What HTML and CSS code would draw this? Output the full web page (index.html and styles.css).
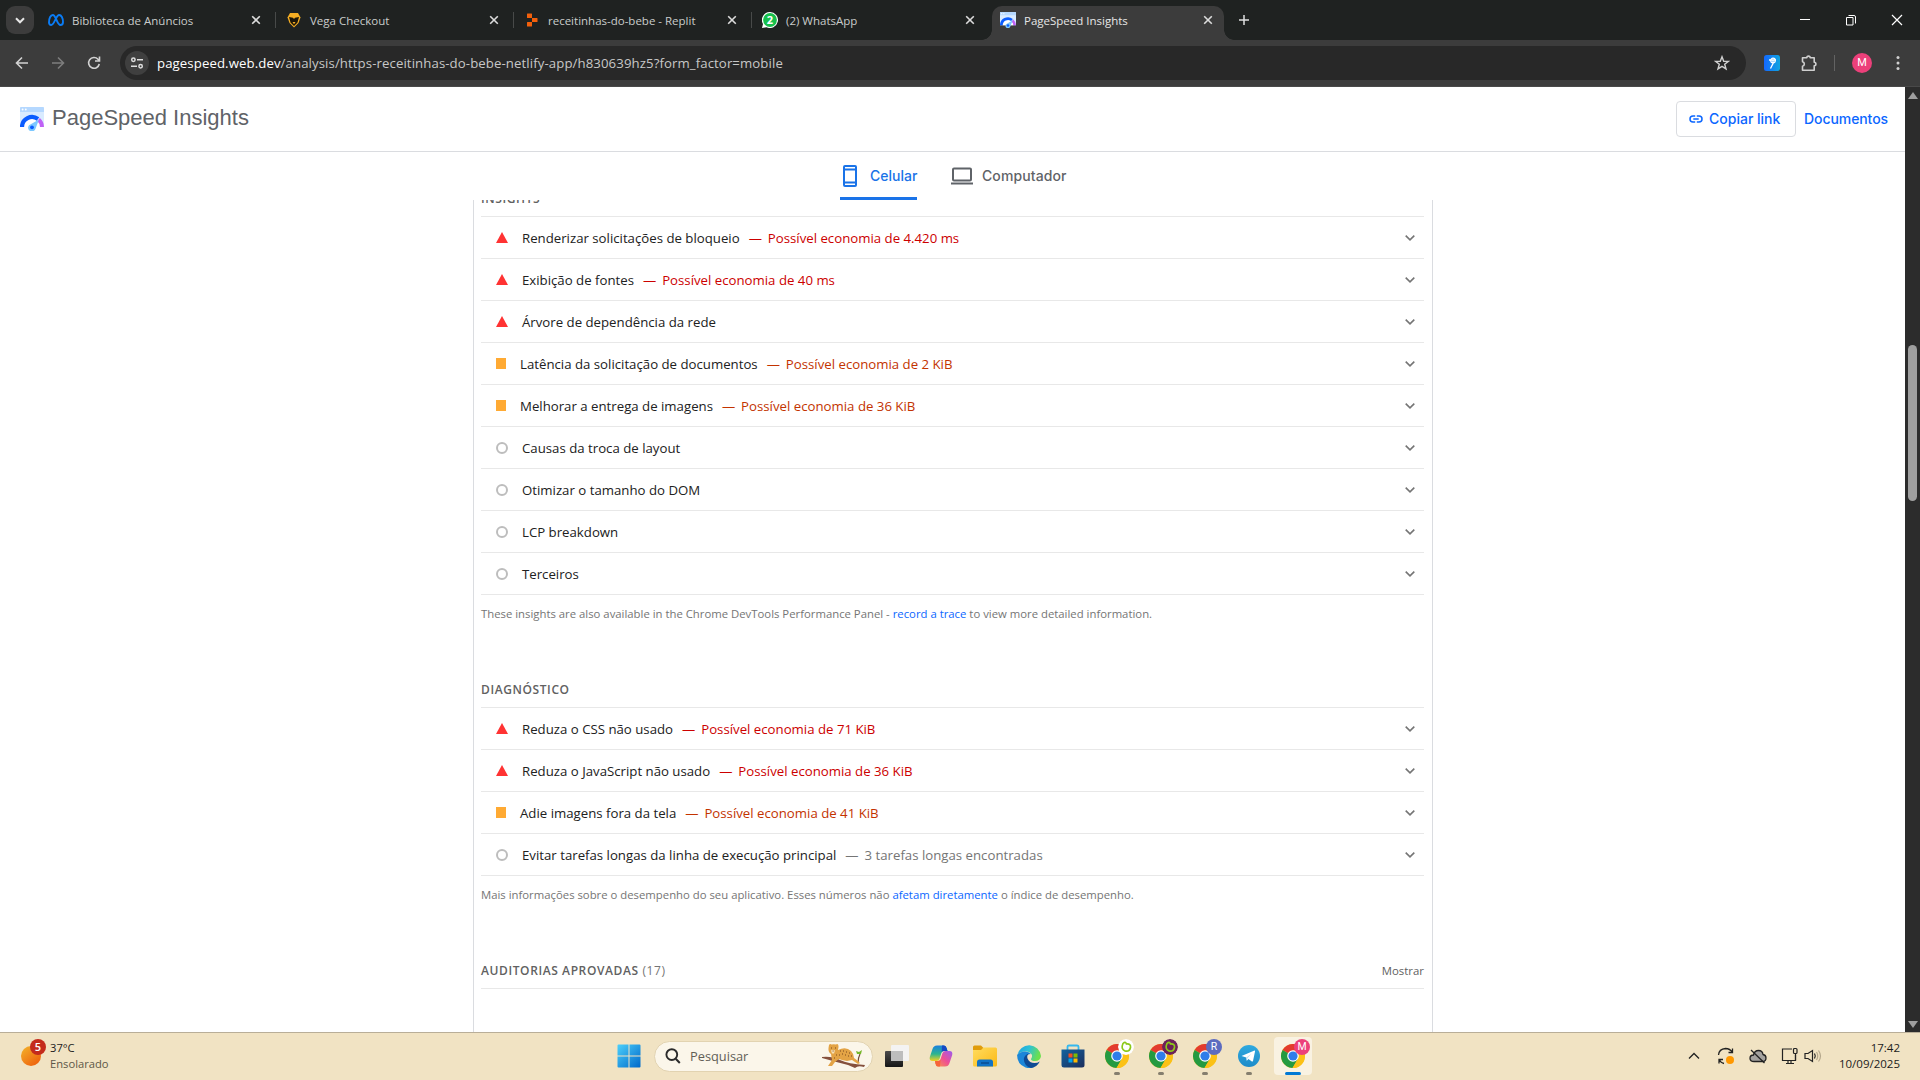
FILE: index.html
```html
<!DOCTYPE html>
<html lang="pt-BR">
<head>
<meta charset="utf-8">
<title>PageSpeed Insights</title>
<link rel="stylesheet" href="styles.css">
</head>
<body>
<svg class="defs" width="0" height="0">
  <defs>
    <linearGradient id="win" x1="0" y1="0" x2="1" y2="1"><stop offset="0" stop-color="#4cd0fb"/><stop offset="1" stop-color="#0068c9"/></linearGradient>
    <linearGradient id="sun" x1="0" y1="0" x2=".8" y2="1"><stop offset="0" stop-color="#f3b52c"/><stop offset="1" stop-color="#ee5f0c"/></linearGradient>
    <linearGradient id="ext" x1="0" y1="0" x2="1" y2="0"><stop offset="0" stop-color="#1468ff"/><stop offset="1" stop-color="#0fa5e0"/></linearGradient>
    <linearGradient id="edgeTop" x1="0" y1="0" x2="1" y2=".3"><stop offset="0" stop-color="#1c9fe0"/><stop offset=".5" stop-color="#2cc0d8"/><stop offset="1" stop-color="#6be04e"/></linearGradient>
    <linearGradient id="folder" x1="0" y1="0" x2="1" y2="1"><stop offset="0" stop-color="#ffdc5e"/><stop offset="1" stop-color="#fbb917"/></linearGradient>
    <linearGradient id="store" x1="0" y1="0" x2="1" y2="1"><stop offset="0" stop-color="#12639f"/><stop offset="1" stop-color="#1c2e5c"/></linearGradient>
    <linearGradient id="tg" x1="0" y1="0" x2="0" y2="1"><stop offset="0" stop-color="#2fa9df"/><stop offset="1" stop-color="#1d8bc9"/></linearGradient>
    <linearGradient id="copA" x1="0" y1="0" x2="0" y2="1"><stop offset="0" stop-color="#1a7fe0"/><stop offset=".55" stop-color="#2bb58f"/><stop offset="1" stop-color="#f3d21e"/></linearGradient>
    <linearGradient id="copB" x1="1" y1="0" x2="0" y2="1"><stop offset="0" stop-color="#9b5cf0"/><stop offset=".5" stop-color="#ee4f94"/><stop offset="1" stop-color="#fb9a45"/></linearGradient>
    <linearGradient id="view" x1="0" y1="0" x2="0" y2="1"><stop offset="0" stop-color="#4b4b4b"/><stop offset="1" stop-color="#161616"/></linearGradient>
    <symbol id="psi" viewBox="0 0 24 24">
      <path d="M0 1.2Q0 0 1.2 0H22.8Q24 0 24 1.2V20H0z" fill="#d9ebff"/>
      <path d="M0 1.2Q0 0 1.2 0H22.8Q24 0 24 1.2V5H0z" fill="#b5d8ff"/>
      <circle cx="2.6" cy="2.5" r=".9" fill="#fff"/><circle cx="5.8" cy="2.5" r=".9" fill="#fff"/>
      <path d="M4 20a8 8 0 0 1 16 0z" fill="#fff"/>
      <path d="M2 20a10 10 0 0 1 16-8" fill="none" stroke="#0a5cff" stroke-width="4.2"/>
      <path d="M18.6 12.6A10 10 0 0 1 22 20" fill="none" stroke="#c061f5" stroke-width="4"/>
      <path d="M19 12.5 15.6 21.5A3.800 3.800 0 1 1 9 18.200z" fill="#7cc8ff"/><circle cx="12" cy="20.300" r="1.900" fill="#0a5cff"/>
    </symbol>
    <symbol id="x" viewBox="0 0 10 10"><path d="M1.200 1.200 8.800 8.800M8.800 1.200 1.200 8.800" stroke="#dcdcdc" stroke-width="1.600" fill="none"/></symbol>
    <symbol id="chev" viewBox="0 0 12 8"><path d="M1.700 1.600 6 5.800 10.300 1.600" stroke="#757575" stroke-width="1.600" fill="none"/></symbol>
    <symbol id="chrome" viewBox="0 0 24 24">
      <circle cx="12" cy="12" r="12" fill="#fbc116"/>
      <path d="M12 12 1.600 6A12 12 0 0 1 22.400 6z" fill="#e33b2e"/>
      <path d="M12 12 1.600 6A12 12 0 0 0 11.500 24L17 15z" fill="#249a41"/>
      <path d="M12 6.500H22.600A12 12 0 0 1 11.500 24L17 14.500z" fill="#fbc116"/>
      <circle cx="12" cy="12" r="5.800" fill="#fff"/><circle cx="12" cy="12" r="4.600" fill="#2f7de9"/>
    </symbol>
  </defs>
</svg>

<div class="tabstrip">
  <button class="tabsearch"><svg width="10" height="7" viewBox="0 0 10 7"><path d="M1 1.300 5 5.300 9 1.300" stroke="#e8e8e8" stroke-width="2" fill="none"/></svg></button>
  <div class="tab">
    <svg class="fav" width="16" height="16" viewBox="0 0 16 16"><path d="M1 10.500C1 6 2.700 3 4.800 3 8 3 9 13 12.500 13c1.700 0 2.500-1.200 2.500-3C15 6 13.300 3 11.200 3 8 3 6.500 13 3.200 13 1.800 13 1 12 1 10.500z" fill="none" stroke="#0a7cf5" stroke-width="1.900"/></svg>
    <span class="tab-title">Biblioteca de Anúncios</span><svg class="close" width="10" height="10"><use href="#x"/></svg>
  </div>
  <div class="tab">
    <svg class="fav" width="16" height="16" viewBox="0 0 16 16"><path d="M4 1h8L14.500 5.500 12.500 11 8 15.500 3.500 11 1.500 5.500z" fill="#f6ae23"/><path d="M3 5l4 .8L8 7l1-1.200L13 5l-1.500 5.500L8 14 4.500 10.500z" fill="#1d1608"/><path d="M6.500 10h3L8 12.300z" fill="#f6ae23"/></svg>
    <span class="tab-title">Vega Checkout</span><svg class="close" width="10" height="10"><use href="#x"/></svg>
  </div>
  <div class="tab">
    <svg class="fav" width="16" height="16" viewBox="0 0 16 16" fill="#f2600c"><path d="M3 2Q3 1.500 3.500 1.500H7.500Q8 1.500 8 2V6H3.500Q3 6 3 5.500zM8 6H13Q13.500 6 13.500 6.500V9.500Q13.500 10 13 10H8zM3 10.500Q3 10 3.500 10H8V14Q8 14.500 7.500 14.500H3.500Q3 14.500 3 14z"/></svg>
    <span class="tab-title">receitinhas-do-bebe - Replit</span><svg class="close" width="10" height="10"><use href="#x"/></svg>
  </div>
  <div class="tab no-sep">
    <svg class="fav" width="16" height="16" viewBox="0 0 16 16"><path d="M8 0a8 8 0 1 1-3.500 15.200L0 16l1-4A8 8 0 0 1 8 0z" fill="#fff"/><circle cx="8" cy="8" r="6.900" fill="#17bf4c"/><text class="wa" x="8" y="11.900" text-anchor="middle">2</text></svg>
    <span class="tab-title">(2) WhatsApp</span><svg class="close" width="10" height="10"><use href="#x"/></svg>
  </div>
  <div class="tab active">
    <svg class="fav" width="16" height="16"><use href="#psi"/></svg>
    <span class="tab-title">PageSpeed Insights</span><svg class="close" width="10" height="10"><use href="#x"/></svg>
  </div>
  <svg class="newtab" width="12" height="12" viewBox="0 0 12 12"><path d="M6 1v10M1 6h10" stroke="#e0e0e0" stroke-width="1.500"/></svg>
  <div class="winctl">
    <svg width="12" height="12" viewBox="0 0 12 12"><path d="M1 5.500h10" stroke="#fff"/></svg>
    <svg width="12" height="12" viewBox="0 0 12 12"><path d="M1.500 3.500h6.500v7.500h-6.500zM3.500 1.500h5.500q1.500 0 1.500 1.500v6.500" stroke="#fff" fill="none"/></svg>
    <svg width="12" height="12" viewBox="0 0 12 12"><path d="M1 1l10 10M11 1 1 11" stroke="#fff" stroke-width="1.200"/></svg>
  </div>
</div>

<div class="toolbar">
  <div class="nav">
    <svg width="16" height="16" viewBox="0 0 16 16"><path d="M14 8H3M8 2.500 2.500 8 8 13.500" fill="none" stroke="#d2d2d2" stroke-width="1.600"/></svg>
    <svg width="16" height="16" viewBox="0 0 16 16"><path d="M2 8h11M8 2.500 13.500 8 8 13.500" fill="none" stroke="#7d7d7d" stroke-width="1.600"/></svg>
    <svg width="16" height="16" viewBox="0 0 16 16"><path d="M13.300 9A5.400 5.400 0 1 1 12 4.200L13.500 5.700M13.500 1.500V6H9" fill="none" stroke="#d2d2d2" stroke-width="1.600"/></svg>
  </div>
  <div class="omnibox">
    <span class="siteinfo"><svg width="14" height="14" viewBox="0 0 14 14" fill="none" stroke="#dedede" stroke-width="1.500"><circle cx="3.400" cy="3.800" r="1.700"/><path d="M7 3.800h6M1 10.300h6"/><circle cx="10.600" cy="10.300" r="1.700"/></svg></span>
    <span class="url"><b>pagespeed.web.dev</b>/analysis/https-receitinhas-do-bebe-netlify-app/h830639hz5?form_factor=mobile</span>
    <svg class="star" width="16" height="16" viewBox="0 0 16 16"><path d="M8 1.800 9.700 6.200 14.400 6.400 10.700 9.300 12 13.900 8 11.300 4 13.900 5.300 9.300 1.600 6.400 6.300 6.200z" fill="none" stroke="#d0d0d0" stroke-width="1.400"/></svg>
  </div>
  <div class="actions">
    <svg width="16" height="16" viewBox="0 0 16 16"><rect width="16" height="16" rx="2.500" fill="url(#ext)"/><circle cx="9" cy="5.500" r="2.300" fill="none" stroke="#fff" stroke-width="1.200"/><path d="M5 5h7M9 5v3.500L6.500 13.500" stroke="#fff" stroke-width="1.300" fill="none"/></svg>
    <svg width="18" height="18" viewBox="0 0 18 18"><path d="M2.500 3.800h4.300a1.700 1.700 0 0 1 3.400 0h4v4.500a1.700 1.700 0 0 1 0 3.400v4.500H2.500v-4a2.300 2.300 0 0 0 0-4.500z" fill="none" stroke="#cfcfcf" stroke-width="1.600" stroke-linejoin="round"/></svg>
    <i class="vsep"></i>
    <span class="avatar">M</span>
    <svg width="4" height="16" viewBox="0 0 4 16" fill="#d0d0d0"><circle cx="2" cy="2.500" r="1.500"/><circle cx="2" cy="8" r="1.500"/><circle cx="2" cy="13.500" r="1.500"/></svg>
  </div>
</div>

<div class="viewport">
  <div class="page">
    <header class="psi-header">
      <svg width="24" height="24" viewBox="0 0 24 24"><use href="#psi"/></svg>
      <h1>PageSpeed Insights</h1>
      <a class="copy"><svg width="14" height="8" viewBox="0 0 14 8" fill="none" stroke="#0b66ff" stroke-width="1.500"><path d="M6.200 1H4a3 3 0 0 0 0 6h2.200M7.800 1H10a3 3 0 0 1 0 6H7.800M4.300 4h5.400"/></svg>Copiar link</a>
      <a class="docs">Documentos</a>
    </header>
    <nav class="device-tabs">
      <a class="device on"><svg width="16" height="24" viewBox="0 0 16 24"><rect x="2" y="2" width="12" height="20" rx="1" fill="none" stroke="#1a73e8" stroke-width="2"/><path d="M2 5.500h12M2 18.500h12" stroke="#1a73e8" stroke-width="2"/></svg>Celular</a>
      <a class="device"><svg width="22" height="18" viewBox="0 0 22 18"><rect x="2" y="1.500" width="18" height="12" rx="1" fill="none" stroke="#5f6368" stroke-width="2"/><path d="M0 16.500h22" stroke="#5f6368" stroke-width="2"/></svg>Computador</a>
    </nav>
    <main class="report">
      <section class="group first">
        <h2>INSIGHTS</h2>
        <div class="audit fail"><i class="mark"></i><span>Renderizar solicitações de bloqueio</span><em><i class="dash">—</i> Possível economia de 4.420 ms</em><svg class="chev" width="12" height="8"><use href="#chev"/></svg></div>
        <div class="audit fail"><i class="mark"></i><span>Exibição de fontes</span><em><i class="dash">—</i> Possível economia de 40 ms</em><svg class="chev" width="12" height="8"><use href="#chev"/></svg></div>
        <div class="audit fail"><i class="mark"></i><span>Árvore de dependência da rede</span><svg class="chev" width="12" height="8"><use href="#chev"/></svg></div>
        <div class="audit average"><i class="mark"></i><span>Latência da solicitação de documentos</span><em><i class="dash">—</i> Possível economia de 2 KiB</em><svg class="chev" width="12" height="8"><use href="#chev"/></svg></div>
        <div class="audit average"><i class="mark"></i><span>Melhorar a entrega de imagens</span><em><i class="dash">—</i> Possível economia de 36 KiB</em><svg class="chev" width="12" height="8"><use href="#chev"/></svg></div>
        <div class="audit info"><i class="mark"></i><span>Causas da troca de layout</span><svg class="chev" width="12" height="8"><use href="#chev"/></svg></div>
        <div class="audit info"><i class="mark"></i><span>Otimizar o tamanho do DOM</span><svg class="chev" width="12" height="8"><use href="#chev"/></svg></div>
        <div class="audit info"><i class="mark"></i><span>LCP breakdown</span><svg class="chev" width="12" height="8"><use href="#chev"/></svg></div>
        <div class="audit info"><i class="mark"></i><span>Terceiros</span><svg class="chev" width="12" height="8"><use href="#chev"/></svg></div>
        <p class="note">These insights are also available in the Chrome DevTools Performance Panel - <a>record a trace</a> to view more detailed information.</p>
      </section>
      <section class="group">
        <h2>DIAGNÓSTICO</h2>
        <div class="audit fail"><i class="mark"></i><span>Reduza o CSS não usado</span><em><i class="dash">—</i> Possível economia de 71 KiB</em><svg class="chev" width="12" height="8"><use href="#chev"/></svg></div>
        <div class="audit fail"><i class="mark"></i><span>Reduza o JavaScript não usado</span><em><i class="dash">—</i> Possível economia de 36 KiB</em><svg class="chev" width="12" height="8"><use href="#chev"/></svg></div>
        <div class="audit average"><i class="mark"></i><span>Adie imagens fora da tela</span><em><i class="dash">—</i> Possível economia de 41 KiB</em><svg class="chev" width="12" height="8"><use href="#chev"/></svg></div>
        <div class="audit info"><i class="mark"></i><span>Evitar tarefas longas da linha de execução principal</span><em><i class="dash">—</i> 3 tarefas longas encontradas</em><svg class="chev" width="12" height="8"><use href="#chev"/></svg></div>
        <p class="note">Mais informações sobre o desempenho do seu aplicativo. Esses números não <a>afetam diretamente</a> o índice de desempenho.</p>
      </section>
      <section class="group passed">
        <h2><span>AUDITORIAS APROVADAS <small>(17)</small></span><span class="show">Mostrar</span></h2>
      </section>
    </main>
  </div>
  <div class="scrollbar"><i class="up"></i><i class="thumb"></i><i class="down"></i></div>
</div>

<footer class="taskbar">
  <div class="weather">
    <svg width="26" height="30" viewBox="0 0 26 30"><circle cx="11" cy="17" r="10" fill="url(#sun)"/><circle cx="18" cy="8" r="8" fill="#c42b1c"/><text class="count" x="18" y="12.300" text-anchor="middle">5</text></svg>
    <div><p>37°C</p><p class="dim">Ensolarado</p></div>
  </div>
  <div class="apps">
    <svg class="start" width="24" height="24" viewBox="0 0 24 24"><path d="M.5 1.500Q.5.500 1.500.500H11.500V11.500H.5zM12.500.500H22.500Q23.500.500 23.500 1.500V11.500H12.500zM.5 12.500H11.500V23.500H1.500Q.5 23.500.5 22.500zM12.500 12.500H23.500V22.500Q23.500 23.500 22.500 23.500H12.500z" fill="url(#win)"/></svg>
    <div class="search">
      <svg width="16" height="16" viewBox="0 0 16 16"><circle cx="6.800" cy="6.600" r="5.400" fill="none" stroke="#2b2b2b" stroke-width="1.900"/><path d="M10.700 10.700 14.800 15" stroke="#2b2b2b" stroke-width="2"/></svg>
      <span>Pesquisar</span>
      <svg class="jaguar" width="44" height="26" viewBox="0 0 44 26"><path d="M0 14Q10 13 18 17T43 22L42 24Q36 22 33 25L26 22Q14 19 0 15z" fill="#85503c"/><path d="M36 20Q36 15 38 11" stroke="#6f4a33" stroke-width="1.200" fill="none"/><path d="M34 8l3 1 3-2-1 4h-4z" fill="#76b82a"/><path d="M7 2Q8 .5 9.500 1.500 11.500 1 14 1.500 15.500.5 16.300 2 17 4 16 7 24 3 29 8 32 11 32 15 35 17 38 20L36 21 30 17 25 18 20 17 17 16 13 19 10 23H6L10 17 9 11Q6 9 6.500 5z" fill="#e3a345"/><path d="M9 7.500Q11 6 13 7.500L12 10.500H10z" fill="#f7dfb2"/><path d="M9 5h1M13 5h1M18 8h1M21 8h1M24 9h1M27 10h1M20 11h1M23 12h1M26 13h1M14 12h1M12 15h1M29 13h1M17 12h1M10.600 8h1" stroke="#7b4a1e" stroke-width="1.200"/></svg>
    </div>
    <div class="app"><svg width="24" height="24" viewBox="0 0 24 24"><rect x="0" y="7" width="18" height="16" rx="1" fill="url(#view)"/><rect x="6" y="1" width="18" height="16" rx="1" fill="#f4f4f4" opacity=".96"/><path d="M6 7H18V17H7Q6 17 6 16z" fill="#bdbdbd"/></svg></div>
    <div class="app"><svg width="24" height="24" viewBox="0 0 24 24"><path d="M8 1.500h7q2 0 2.800 3L18.500 7H15q-2 0-2.600 2L10.500 15q-.8 2-3 2H3.500Q0 17 .8 13L3.500 5Q4.500 1.500 8 1.500z" fill="url(#copA)"/><path d="M13 1.500h2q2 0 2.800 3L18.500 7H15q-1.700 0-2.300 1.300z" fill="#1649c4"/><path d="M16 22.500H9q-2 0-2.600-3L6 17H9q2 0 2.600-2L13.500 9q.8-2 3-2H20.500Q24 7 23.200 11L20.500 19Q19.500 22.500 16 22.500z" fill="url(#copB)"/><path d="M11 22.500H9q-2 0-2.600-3L6 17H9q1.700 0 2.500-1.500z" fill="#f6643a"/></svg></div>
    <div class="app"><svg width="24" height="24" viewBox="0 0 24 24"><path d="M0 3Q0 1.500 1.500 1.500H8L10.500 4V9H0z" fill="#e09c0b"/><path d="M0 6H8L10.500 3.500H22.500Q24 3.500 24 5V21Q24 22.500 22.500 22.500H1.500Q0 22.500 0 21z" fill="url(#folder)"/><path d="M4 22.500V18Q4 15.500 6.500 15.500H17.500Q20 15.500 20 18V22.500z" fill="#1173c6"/><path d="M8 19h8" stroke="#0b4d91" stroke-width="1.500"/></svg></div>
    <div class="app"><svg width="24" height="24" viewBox="0 0 24 24"><path d="M.3 11A12 12 0 0 1 24 12Q23.500 17 18 17 14 17 14 15 15.500 13.500 15 11 13 7 8 7.500 3 7.500.3 11z" fill="url(#edgeTop)"/><path d="M.1 11Q3 7.500 8 7.500 12 7.500 14 10 8.500 10 9 16 10 21 17 22.900 13 25 8.500 23.500 0 20 .1 11z" fill="#1b86d8"/><path d="M12 9.500Q9.500 11 10.500 14.500 12.500 19 17.500 19 20.500 19 22.800 17.500 20 23 14 24 7 22 6.800 15 7.500 10.500 12 9.500z" fill="#0e4a94"/></svg></div>
    <div class="app"><svg width="24" height="24" viewBox="0 0 24 24"><path d="M6.500 6V2.800Q6.500 1.500 8 1.500H16Q17.500 1.500 17.500 2.800V6" fill="none" stroke="#35b8ee" stroke-width="1.800"/><path d="M.5 5.500H23.500V21Q23.500 23.500 21 23.500H3Q.5 23.500.5 21z" fill="url(#store)"/><path d="M7.500 9.500h4v4h-4z" fill="#f25022"/><path d="M12.500 9.500h4v4h-4z" fill="#7fba00"/><path d="M7.500 14.500h4v4h-4z" fill="#00a4ef"/><path d="M12.500 14.500h4v4h-4z" fill="#ffb900"/></svg></div>
    <div class="app run"><svg width="24" height="24"><use href="#chrome"/></svg><svg class="badge" width="16" height="16" viewBox="0 0 16 16"><circle cx="8" cy="8" r="8" fill="#fff"/><path d="M5 4.500Q7.500 2 8.500 5 13 4.500 12.500 8.500 11.500 13 7 12 2.500 10 5 4.500z" fill="none" stroke="#8cc919" stroke-width="1.700"/></svg></div>
    <div class="app run"><svg width="24" height="24"><use href="#chrome"/></svg><svg class="badge" width="16" height="16" viewBox="0 0 16 16"><circle cx="8" cy="8" r="8" fill="#6c2159"/><path d="M5 4.500Q7.500 2 8.500 5 13 4.500 12.500 8.500 11.500 13 7 12 2.500 10 5 4.500z" fill="none" stroke="#8cc919" stroke-width="1.700"/></svg></div>
    <div class="app run"><svg width="24" height="24"><use href="#chrome"/></svg><span class="badge r">R</span></div>
    <div class="app run"><svg width="24" height="24" viewBox="0 0 24 24"><circle cx="12" cy="12" r="11" fill="url(#tg)"/><path d="M4.500 12 17.500 6.500Q18.300 6.500 18 7.500L16 17Q15.500 18 14.500 17.200L11.500 15 9.800 16.700 9.300 13.500z" fill="#fff"/><path d="M9.300 13.500 14.500 9.800 10.500 14 9.800 16.700z" fill="#b8dff0"/></svg></div>
    <div class="app run current"><svg width="24" height="24"><use href="#chrome"/></svg><span class="badge m">M</span></div>
  </div>
  <div class="tray">
    <svg width="12" height="8" viewBox="0 0 12 8"><path d="M1 6.500 6 1.500 11 6.500" fill="none" stroke="#222" stroke-width="1.300"/></svg>
    <svg width="18" height="18" viewBox="0 0 18 18"><path d="M1.500 8Q2 2 8.500 1.500 13 1.500 15.500 5.500M15.500 1.500V5.500H11.500M2 16.500V12.500H6M2 12.500Q4 16 7 16.500" fill="none" stroke="#222" stroke-width="1.300"/><circle cx="13" cy="13" r="4" fill="#ff9800"/></svg>
    <svg width="18" height="16" viewBox="0 0 18 16"><path d="M5 13.500Q1 13.500 1 10.300 1 7 4.500 7 5.500 2.500 9.500 2.500 13.500 2.500 14 6.500 17 7 17 10 17 13.500 13.500 13.500z" fill="#a4a29f" stroke="#222" stroke-width="1.300"/><path d="M2 2 15.500 15" stroke="#222" stroke-width="1.300"/></svg>
    <svg width="18" height="18" viewBox="0 0 18 18" fill="none" stroke="#222" stroke-width="1.200"><path d="M11 2H1.500V13.500H14.500V8M5 16.500h8M7 13.500v3M10 13.500v3"/><rect x="12.500" y="1.500" width="3.500" height="5" rx="1"/><path d="M14.500 6.500v7"/></svg>
    <svg width="18" height="14" viewBox="0 0 18 14" fill="none" stroke="#222" stroke-width="1.200"><path d="M1 4.500H4L8.500 1.500V12.500L4 9.500H1z"/><path d="M10.500 4.500Q12 7 10.500 9.500"/><path d="M12.500 3Q15 7 12.500 11M14.500 1.500Q18.500 7 14.500 12.500" stroke="#b5a88c"/></svg>
    <div class="clock"><p>17:42</p><p>10/09/2025</p></div>
  </div>
</footer>
</body>
</html>
```
FILE: styles.css
```css
* { box-sizing: border-box; margin: 0; padding: 0; }
body { width: 1920px; height: 1080px; overflow: hidden; display: flex; flex-direction: column; font-family: "Open Sans", "Noto Sans", sans-serif; background: #fff; }
svg { display: block; flex: none; }
button { border: 0; background: none; font: inherit; color: inherit; }
em, i, b { font-style: normal; }
.defs { position: absolute; }

/* browser tab strip */
.tabstrip { height: 40px; flex: none; display: flex; align-items: center; background: #1f2221; color: #c9cccb; font-size: 11.5px; }
.tabsearch { width: 28px; height: 28px; margin: 0 4px 0 6px; border-radius: 9px; background: #3c3c3c; display: flex; align-items: center; justify-content: center; }
.tab { position: relative; width: 238px; height: 34px; margin-top: 6px; padding: 0 15px 6px 10px; display: flex; align-items: center; }
.tab::after { content: ""; position: absolute; right: 0; top: 6px; width: 1px; height: 16px; background: #484a49; }
.tab.no-sep::after { display: none; }
.tab-title { margin-left: 8px; flex: 1; white-space: nowrap; }
.tab.active { color: #e6e6e6; }
.tab.active > * { position: relative; z-index: 1; }
.tab.active::before { content: ""; position: absolute; left: 2px; right: 4px; top: 0; bottom: 0; border-radius: 10px 10px 0 0; background: #3c3c3c; }
.tab.active::after { top: auto; bottom: 0; left: -8px; right: auto; width: 252px; height: 10px; background: radial-gradient(circle at 0 0, transparent 9.5px, #3c3c3c 10px) 0 0 / 10px 10px no-repeat, radial-gradient(circle at 10px 0, transparent 9.5px, #3c3c3c 10px) 100% 0 / 10px 10px no-repeat; }
.wa { font: bold 11px "Open Sans", sans-serif; fill: #fff; }
.newtab { margin-left: 10px; }
.winctl { margin-left: auto; display: flex; gap: 34px; padding-right: 17px; }

/* address row */
.toolbar { height: 47px; flex: none; background: #3c3c3c; display: flex; align-items: center; border-bottom: 1px solid #494949; }
.nav { display: flex; gap: 20px; padding-left: 14px; width: 120px; flex: none; }
.omnibox { width: 1626px; height: 34px; border-radius: 17px; background: #282828; display: flex; align-items: center; padding: 0 16px 0 5px; }
.siteinfo { width: 24px; height: 24px; border-radius: 50%; background: #3f3f3f; display: flex; align-items: center; justify-content: center; }
.url { margin-left: 8px; flex: 1; font-size: 13.200px; letter-spacing: .1px; color: #c7c7c7; white-space: nowrap; }
.url b { font-weight: 400; color: #fff; }
.actions { display: flex; align-items: center; padding-left: 18px; }
.actions svg:nth-child(2) { margin-left: 20px; }
.vsep { width: 1px; height: 16px; background: #636363; margin: 0 17px 0 16px; }
.avatar { width: 20px; height: 20px; border-radius: 50%; background: #ec407a; color: #fff; font: 11px/20px Roboto, sans-serif; text-align: center; margin-right: 24px; }

/* page */
.viewport { height: 945px; flex: none; display: flex; }
.page { width: 1905px; height: 945px; overflow: hidden; display: flex; flex-direction: column; }
.psi-header { height: 65px; flex: none; border-bottom: 1px solid #dadce0; display: flex; align-items: center; padding: 0 17px 0 20px; color: #0b66ff; font: 500 14px "Inter", sans-serif; }
.psi-header h1 { margin: -3px auto 0 8px; font: 22px "Liberation Sans", Arial, sans-serif; color: #5f6368; }
.copy { height: 36px; width: 120px; border: 1px solid #dadce0; border-radius: 4px; padding: 0 0 1px 12px; display: flex; align-items: center; gap: 6px; margin-right: 8px; }
.docs { letter-spacing: -.08px; padding-bottom: 1px; }
.device-tabs { height: 48px; flex: none; display: flex; padding-left: 840px; gap: 34px; font: 500 14px "Inter", sans-serif; color: #5f6368; }
.device { display: flex; align-items: center; gap: 9px; padding-top: 2px; letter-spacing: .1px; border-bottom: 3px solid transparent; }
.device.on { width: 77px; padding-left: 2px; gap: 12px; letter-spacing: 0; color: #1a73e8; border-color: #1a73e8; }
.report { width: 960px; flex: 1; overflow: hidden; margin-left: 473px; border: 1px solid #dadce0; border-width: 0 1px; padding: 0 8px 0 7px; }
.group h2 { height: 38px; padding-top: 11px; font: 600 12px/18px "Open Sans", sans-serif; letter-spacing: .6px; color: #616161; border-bottom: 1px solid #e8e8e8; display: flex; justify-content: space-between; }
.group.first h2 { margin-top: -21px; }
.group h2 small { font-size: inherit; font-weight: 400; color: #757575; }
.audit { height: 42px; border-bottom: 1px solid #e8e8e8; padding: 0 8px 0 15px; display: flex; align-items: center; font-size: 13.230px; color: #212121; white-space: nowrap; }
.audit em { margin-left: 9px; }
.dash { margin-right: 2.500px; }
.chev { margin-left: auto; }
.mark { flex: none; margin-right: 14px; }
.fail .mark { border: 6px solid transparent; border-top: 0; border-bottom: 11px solid #f33; }
.fail em { color: #c00; }
.average .mark { width: 10px; height: 11px; background: #fa3; }
.average em { color: #c33300; }
.info .mark { width: 12px; height: 12px; border: 2px solid #bdbdbd; border-radius: 50%; }
.info em { color: #757575; }
.note { padding-top: 10px; font-size: 11.330px; line-height: 18px; height: 75px; color: #757575; }
.note a { color: #0b66ff; }
.show { font-weight: 400; font-size: 11.400px; letter-spacing: 0; }
.scrollbar { width: 15px; background: #2c2c2c; display: flex; flex-direction: column; align-items: center; }
.scrollbar i { flex: none; }
.up, .down { border: 5px solid transparent; }
.up { border-top: 0; border-bottom: 7px solid #9f9f9f; margin-top: 5px; }
.thumb { width: 9px; height: 156px; border-radius: 5px; background: #9f9f9f; margin-top: 246px; }
.down { border-bottom: 0; border-top: 7px solid #9f9f9f; margin-top: auto; margin-bottom: 4px; }

/* taskbar */
.taskbar { height: 48px; flex: none; border-top: 1px solid #b9ae98; background: #f1e3c3; display: flex; align-items: center; font-size: 11.200px; color: #1c1c1c; padding-bottom: 1px; }
.weather { display: flex; padding-left: 20px; gap: 4px; width: 617px; line-height: 16px; }
.weather .dim { color: #5d5747; }
.weather svg { margin-top: -1px; }
.count { font: 600 11px "Open Sans", sans-serif; fill: #fff; }
.apps { display: flex; align-items: center; height: 46px; }
.search { width: 219px; height: 31px; margin: 0 4px 0 13px; border: 1px solid #e2d3b1; border-radius: 16px; background: #fbf6ea; display: flex; align-items: center; padding: 0 6px 0 10px; font-size: 12.800px; color: #625e56; }
.search span { margin-left: 9px; }
.jaguar { margin-left: auto; }
.app { position: relative; width: 40px; height: 40px; margin-right: 4px; display: flex; align-items: center; justify-content: center; }
.app.run::after { content: ""; position: absolute; left: 17px; bottom: 1px; width: 6px; height: 3px; border-radius: 2px; background: #857e6e; }
.app.current::before { content: ""; position: absolute; inset: 1px; border-radius: 4px; background: #f9f2e2; }
.app.current svg { position: relative; }
.app.run.current::after { left: 12px; width: 16px; background: #0078d4; }
.badge { position: absolute; left: 21px; top: 3px; width: 16px; height: 16px; border-radius: 50%; font: 10.500px/16px Roboto, sans-serif; text-align: center; color: #fff; }
.badge.r { background: #5c6bc0; }
.badge.m { background: #ec407a; }
.tray { margin-left: auto; display: flex; align-items: center; padding-right: 20px; }
.tray svg { margin-right: 14px; }
.tray svg:nth-child(1) { margin-right: 17px; }
.tray svg:nth-child(4) { margin-right: 5px; }
.tray svg:nth-child(5) { margin-right: 15px; }
.clock { width: 63px; text-align: right; line-height: 16px; font-size: 11.500px; }
```
